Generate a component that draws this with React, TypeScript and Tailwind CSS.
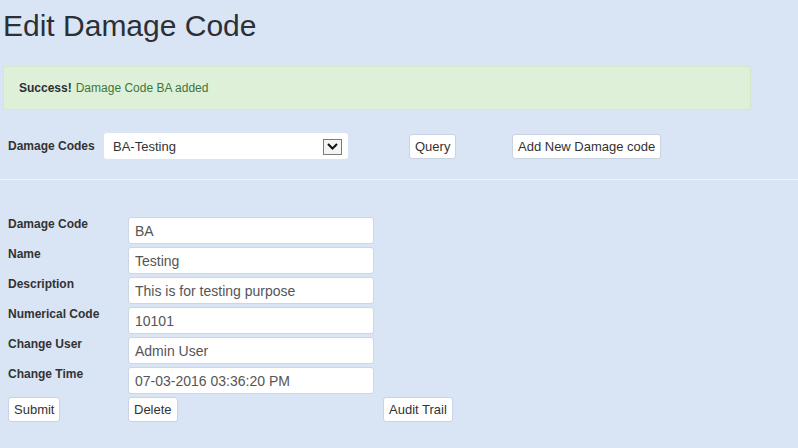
import React from 'react';

const fields = [
  { label: 'Damage Code', value: 'BA' },
  { label: 'Name', value: 'Testing' },
  { label: 'Description', value: 'This is for testing purpose' },
  { label: 'Numerical Code', value: '10101' },
  { label: 'Change User', value: 'Admin User' },
  { label: 'Change Time', value: '07-03-2016 03:36:20 PM' },
];

const Btn: React.FC<{ children: React.ReactNode }> = ({ children }) => (
  <button className="h-[25px] px-[5px] bg-white border border-[#c9d3e2] rounded-[3px] text-[13px] text-[#333] leading-none">
    {children}
  </button>
);

export default function App() {
  return (
    <div className="w-[798px] h-[448px] bg-[#d9e4f4] overflow-hidden font-['Liberation_Sans',Arial,sans-serif] text-[#333]">
      <h1 className="pl-[3px] pt-[9px] text-[30px] leading-[34px] text-[#2b2f36]">Edit Damage Code</h1>

      <div className="ml-[3px] mt-[23px] w-[748px] h-[44px] bg-[#dff0d8] border border-[#d3e8c6] rounded-[3px] flex items-center pl-[15px] text-[12px]">
        <b className="text-[#2b2f36]">Success!</b>
        <span className="ml-[4px] text-[#3c763d]">Damage Code BA added</span>
      </div>

      <div className="flex items-center mt-[23px] h-[26px]">
        <span className="pl-[8px] w-[104px] text-[12px] font-bold">Damage Codes</span>
        <div className="w-[244px] h-[26px] bg-white rounded-[3px] flex items-center pl-[9px] pr-[6px] pt-[1px] text-[13px]">
          <span className="flex-1">BA-Testing</span>
          <span className="w-[19px] h-[16px] border border-[#7a7a7a] bg-[#f4f4f4] flex items-center justify-center">
            <svg width="11" height="7" viewBox="0 0 11 7">
              <path d="M1 1 L5.5 5.5 L10 1" stroke="#111" strokeWidth="2" fill="none" />
            </svg>
          </span>
        </div>
        <div className="ml-[61px] w-[103px]">
          <Btn>Query</Btn>
        </div>
        <Btn>Add New Damage code</Btn>
      </div>

      <div className="mt-[20px] h-px bg-[#eef2f8]" />

      <div className="mt-[37px] flex flex-col gap-[3px]">
        {fields.map((f) => (
          <div key={f.label} className="flex h-[27px]">
            <span className="pl-[8px] w-[128px] text-[12px] font-bold -mt-[2px]">{f.label}</span>
            <div className="w-[246px] h-[27px] bg-white border border-[#ccd6e4] rounded-[3px] flex items-center pl-[6px] pt-[2px] text-[14px] text-[#555]">
              {f.value}
            </div>
          </div>
        ))}
      </div>

      <div className="flex mt-[3px]">
        <div className="w-[128px] pl-[8px]">
          <Btn>Submit</Btn>
        </div>
        <div className="w-[255px]">
          <Btn>Delete</Btn>
        </div>
        <Btn>Audit Trail</Btn>
      </div>
    </div>
  );
}
